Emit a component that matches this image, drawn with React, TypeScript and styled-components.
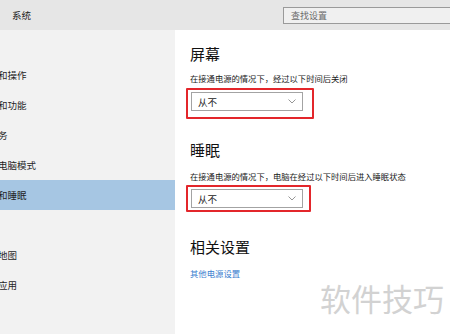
import React from 'react';
import styled, { createGlobalStyle } from 'styled-components';

const GlobalStyle = createGlobalStyle`
  html, body {
    margin: 0;
    padding: 0;
    background: #ffffff;
  }
  body {
    font-family: "Noto Sans CJK SC", "Noto Sans", sans-serif;
    color: #1a1a1a;
  }
`;

const Window = styled.div`
  width: 450px;
  height: 334px;
  overflow: hidden;
  position: relative;
  display: flex;
  flex-direction: column;
  background: #fff;
`;

const TopBar = styled.header`
  height: 30px;
  flex: none;
  display: flex;
  align-items: center;
  background: #e6e6e6;
`;

const Title = styled.div`
  width: 271px;
  padding-left: 12px;
  font-size: 9.5px;
  color: #1a1a1a;
`;

const Search = styled.div`
  flex: 1;
  height: 15px;
  margin-top: 1px;
  margin-right: -20px;
  border: 1px solid #9a9a9a;
  background: #f0f0f0;
  display: flex;
  align-items: center;
  padding-left: 7px;
  font-size: 9px;
  color: #6a6a6a;
`;

const Body = styled.div`
  flex: 1;
  display: flex;
`;

const Sidebar = styled.nav`
  width: 175px;
  flex: none;
  background: #f2f2f2;
  overflow: hidden;
`;

const NavItem = styled.div<{ $active?: boolean }>`
  height: 30px;
  display: flex;
  align-items: center;
  margin-left: -21px;
  padding-right: 21px;
  font-size: 9.5px;
  white-space: nowrap;
  color: #1f1f1f;
  background: ${(p) => (p.$active ? '#a6c6e3' : 'transparent')};
`;

const Content = styled.main`
  flex: 1;
  padding-left: 15px;
  display: flex;
  flex-direction: column;
  align-items: flex-start;
`;

const Heading = styled.h2<{ $top: number }>`
  margin: ${(p) => p.$top}px 0 0;
  font-size: 15px;
  font-weight: normal;
  line-height: 20px;
  color: #111;
`;

const Desc = styled.div<{ $top: number }>`
  margin-top: ${(p) => p.$top}px;
  font-size: 8.3px;
  line-height: 12px;
  white-space: nowrap;
  color: #1a1a1a;
`;

const Mark = styled.div<{ $top: number; $w: number; $h: number }>`
  margin-top: ${(p) => p.$top}px;
  margin-left: -4px;
  width: ${(p) => p.$w}px;
  height: ${(p) => p.$h}px;
  box-sizing: border-box;
  border: 2px solid #e3262b;
  border-radius: 1px;
  padding: 2px 0 0 3px;
`;

const Select = styled.div`
  width: 112px;
  height: 19px;
  box-sizing: border-box;
  border: 1px solid #a3a3a3;
  background: #fff;
  display: flex;
  align-items: center;
  justify-content: space-between;
  padding: 0 6px 0 6px;
  font-size: 9.5px;
  color: #222;
`;

const Link = styled.a`
  margin-top: 10px;
  font-size: 8.4px;
  line-height: 12px;
  color: #3a7ecf;
  text-decoration: none;
`;

const Watermark = styled.div`
  position: absolute;
  left: 320px;
  top: 280px;
  font-size: 31px;
  line-height: 36px;
  color: #d2d2d2;
  pointer-events: none;
`;

const Chevron = () => (
  <svg width="8" height="5" viewBox="0 0 8 5">
    <path d="M0.5 0.5 L4 4 L7.5 0.5" fill="none" stroke="#8a8a8a" strokeWidth="0.9" />
  </svg>
);

const navItems = [
  '显示',
  '通知和操作',
  '应用和功能',
  '多任务',
  '平板电脑模式',
  '电源和睡眠',
  '存储',
  '脱机地图',
  '默认应用',
  '关于',
];

export default function App() {
  return (
    <Window>
      <GlobalStyle />
      <TopBar>
        <Title>系统</Title>
        <Search>查找设置</Search>
      </TopBar>
      <Body>
        <Sidebar>
          {navItems.map((t) => (
            <NavItem key={t} $active={t === '电源和睡眠'}>
              {t}
            </NavItem>
          ))}
        </Sidebar>
        <Content>
          <Heading $top={14}>屏幕</Heading>
          <Desc $top={8}>在接通电源的情况下，经过以下时间后关闭</Desc>
          <Mark $top={4} $w={128} $h={31}>
            <Select>
              从不
              <Chevron />
            </Select>
          </Mark>
          <Heading $top={21}>睡眠</Heading>
          <Desc $top={10}>在接通电源的情况下，电脑在经过以下时间后进入睡眠状态</Desc>
          <Mark $top={3} $w={125} $h={27}>
            <Select>
              从不
              <Chevron />
            </Select>
          </Mark>
          <Heading $top={25}>相关设置</Heading>
          <Link href="#">其他电源设置</Link>
        </Content>
      </Body>
      <Watermark>软件技巧</Watermark>
    </Window>
  );
}
